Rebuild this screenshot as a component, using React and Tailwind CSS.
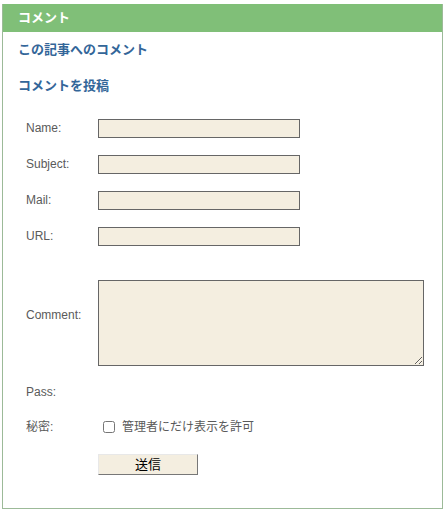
export default function App() {
  const fields = ['Name:', 'Subject:', 'Mail:', 'URL:'];

  return (
    <div className="w-[445px] h-[511px] bg-white pt-1 px-[2px]" style={{ fontFamily: '"Liberation Sans", Arial, "Noto Sans CJK JP", sans-serif' }}>
      <div className="border border-[#9cba98] border-t-0 h-[505px] flex flex-col">
        <div className="h-[28px] bg-[#80bf78] flex items-center pl-[15px] text-white text-[13px] font-bold">
          コメント
        </div>
        <div className="pl-[15px] pt-[8px] text-[13px] font-bold text-[#336699] leading-[20px]">
          この記事へのコメント
        </div>
        <div className="pl-[15px] pt-[16px] text-[13px] font-bold text-[#336699] leading-[20px]">
          コメントを投稿
        </div>

        <div className="pl-[23px] pt-[14px] text-[12px] text-[#5a5a5a]">
          {fields.map((label) => (
            <div key={label} className="flex items-center h-[36px]">
              <span className="w-[72px]">{label}</span>
              <input
                type="text"
                className="w-[202px] h-[19px] bg-[#f4eee0] border border-[#666] outline-none"
              />
            </div>
          ))}

          <div className="flex items-start mt-[26px] h-[86px]">
            <span className="w-[72px] pt-[26px]">Comment:</span>
            <textarea className="w-[326px] h-[86px] bg-[#f4eee0] border border-[#666] outline-none resize" />
          </div>

          <div className="flex items-center h-[20px] mt-[16px]">
            <span className="w-[72px]">Pass:</span>
          </div>

          <div className="flex items-center h-[20px] mt-[15px]">
            <span className="w-[77px]">秘密:</span>
            <input type="checkbox" className="w-[12px] h-[12px] m-0" />
            <span className="ml-[7px]">管理者にだけ表示を許可</span>
          </div>

          <div className="mt-[17px] pl-[72px]">
            <button className="w-[100px] h-[21px] bg-[#f4eee0] border border-t-[#e8e8e8] border-l-[#e8e8e8] border-r-[#777] border-b-[#777] text-[13px] text-black leading-none">
              送信
            </button>
          </div>
        </div>
      </div>
    </div>
  );
}
